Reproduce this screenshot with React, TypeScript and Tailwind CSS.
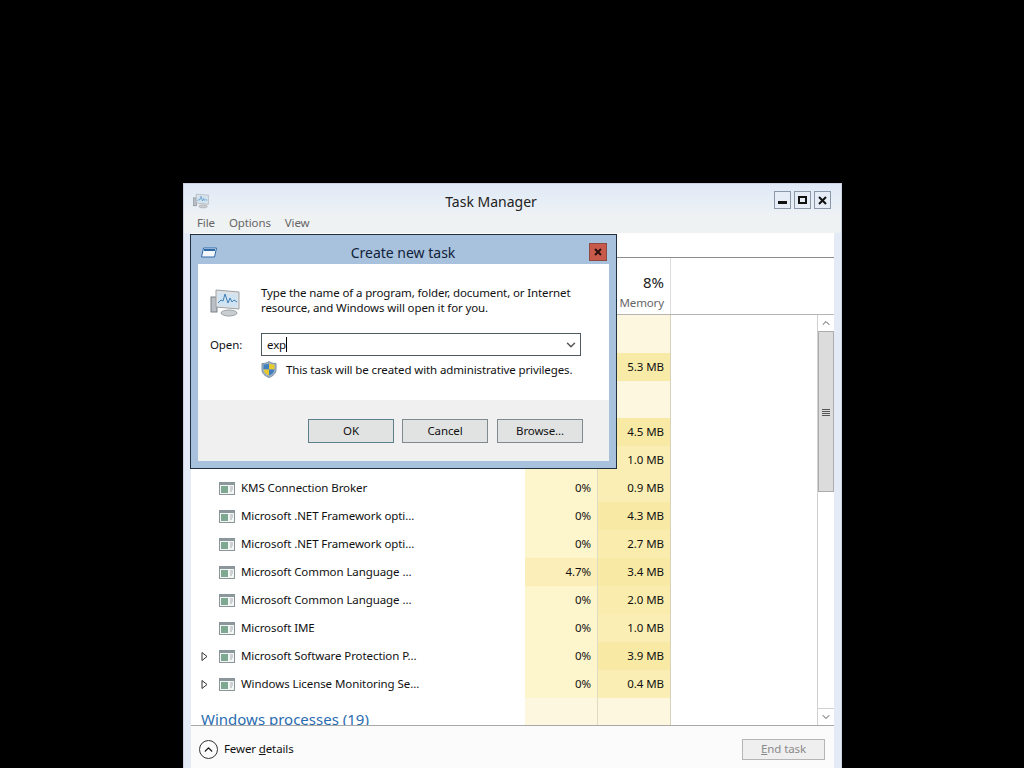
import { ChevronDown, ChevronUp } from 'lucide-react';

const FONT = '"Noto Sans", "Open Sans", sans-serif';

interface Row {
  name?:   string;
  cpu?:    string;
  mem?:    string;
  cpuBg:   string;
  memBg:   string;
  h:       string;
  arrow?:  boolean;
}

const rows: Row[] = [
  { cpuBg: 'bg-[#fdf7e0]', memBg: 'bg-[#fdf7e0]', h: 'h-[38px]' },
  { mem: '5.3 MB', cpuBg: 'bg-[#fdf5cb]', memBg: 'bg-[#f8eba8]', h: 'h-[28px]' },
  { cpuBg: 'bg-[#fdf7e0]', memBg: 'bg-[#fdf7e0]', h: 'h-[37px]' },
  { mem: '4.5 MB', cpuBg: 'bg-[#fdf5cb]', memBg: 'bg-[#f8eaa5]', h: 'h-[28px]' },
  { mem: '1.0 MB', cpuBg: 'bg-[#fdf5cb]', memBg: 'bg-[#faeeb4]', h: 'h-[28px]' },
  { name: 'KMS Connection Broker', cpu: '0%', mem: '0.9 MB', cpuBg: 'bg-[#fdf5cb]', memBg: 'bg-[#faeeb4]', h: 'h-[28px]' },
  { name: 'Microsoft .NET Framework opti...', cpu: '0%', mem: '4.3 MB', cpuBg: 'bg-[#fdf5cb]', memBg: 'bg-[#f8eaa5]', h: 'h-[28px]' },
  { name: 'Microsoft .NET Framework opti...', cpu: '0%', mem: '2.7 MB', cpuBg: 'bg-[#fdf5cb]', memBg: 'bg-[#f9ecad]', h: 'h-[28px]' },
  { name: 'Microsoft Common Language ...', cpu: '4.7%', mem: '3.4 MB', cpuBg: 'bg-[#fbeeb9]', memBg: 'bg-[#f8eaa5]', h: 'h-[28px]' },
  { name: 'Microsoft Common Language ...', cpu: '0%', mem: '2.0 MB', cpuBg: 'bg-[#fdf5cb]', memBg: 'bg-[#f9ecad]', h: 'h-[28px]' },
  { name: 'Microsoft IME', cpu: '0%', mem: '1.0 MB', cpuBg: 'bg-[#fdf5cb]', memBg: 'bg-[#faeeb4]', h: 'h-[28px]' },
  { name: 'Microsoft Software Protection P...', cpu: '0%', mem: '3.9 MB', cpuBg: 'bg-[#fdf5cb]', memBg: 'bg-[#f8eaa5]', h: 'h-[28px]', arrow: true },
  { name: 'Windows License Monitoring Se...', cpu: '0%', mem: '0.4 MB', cpuBg: 'bg-[#fdf5cb]', memBg: 'bg-[#faeeb4]', h: 'h-[28px]', arrow: true },
];

function ProcessIcon() {
  return (
    <svg width="16" height="13" viewBox="0 0 16 13" className="shrink-0">
      <rect x="0.5" y="0.5" width="15" height="12" fill="#f4f6f6" stroke="#8a9499" />
      <rect x="1" y="1" width="14" height="2" fill="#8d989d" />
      <rect x="2" y="4" width="7" height="7" fill="#7fa892" />
      <path d="M11 5h3M11 7h3M11 9h2" stroke="#a3abaf" />
    </svg>
  );
}

function MonitorIcon({ size }: { size: number }) {
  return (
    <svg width={size} height={size} viewBox="0 0 32 32">
      <rect x="1" y="11" width="6" height="15" fill="#b9bfc4" stroke="#7b8287" />
      <path d="M6 4l23 2v17L6 21z" fill="#dfe3e6" stroke="#9aa1a6" />
      <path d="M8 7l19 1.500v12.500L8 19z" fill="#cfe3f3" />
      <path d="M8 17l3-3 2 1 2-7 3 9 2-5 2 4 2-2 3 2" fill="none" stroke="#3f7fb5" />
      <ellipse cx="19" cy="27" rx="8" ry="3" fill="#c9cdd0" stroke="#9ba1a5" />
    </svg>
  );
}

function ShieldIcon() {
  return (
    <svg width="16" height="17" viewBox="0 0 16 17">
      <path d="M8 .5c2 1.500 4 2 7 2v6c0 4-3 6.500-7 8-4-1.500-7-4-7-8v-6c3 0 5-.5 7-2z" fill="#9fb2c4" stroke="#7d8fa2" />
      <path d="M8 2.500v6H2.500v-5c2 0 4-.3 5.500-1z" fill="#3f7fc0" />
      <path d="M8 2.500c1.500.7 3.500 1 5.500 1v5H8z" fill="#e8c92e" />
      <path d="M2.500 8.500H8v6c-3-1-5-3-5.500-6z" fill="#e8c92e" />
      <path d="M8 8.500h5.500c-.5 3-2.500 5-5.500 6z" fill="#3f7fc0" />
    </svg>
  );
}

function CaptionButton({ children }: { children: React.ReactNode }) {
  return (
    <div className="w-[17px] h-[18px] border border-[#8a98aa] bg-[#e6edf7] flex items-center justify-center">
      {children}
    </div>
  );
}

function DialogButton({ label, className }: { label: string; className?: string }) {
  return (
    <div className={`w-[86px] h-[24px] border bg-[#e1e2e2] text-[11.5px] tracking-[-0.12px] text-[#111] flex items-center justify-center ${className ?? 'border-[#7f8a8f]'}`}>
      {label}
    </div>
  );
}

function CreateTaskDialog() {
  return (
    <div className="absolute left-[190px] top-[234px] w-[427px] h-[235px] border border-[#20303f] bg-[#a8c1dc] flex flex-col px-[7px] pb-[7px]">
      <div className="h-[29px] shrink-0 flex items-center relative">
        <svg width="16" height="11" viewBox="0 0 16 11" className="ml-[3px] mt-[5px] shrink-0">
          <path d="M2.500 1h13l-2 9H.5z" fill="#f4f8fd" stroke="#2f6aa8" />
          <path d="M3 3h11" stroke="#2f6aa8" strokeWidth="2" />
        </svg>
        <div className="flex-1 text-center text-[14px] text-[#10223a] mt-[6px]">Create new task</div>
        <div className="w-[18px] h-[18px] mr-[2px] mt-[4px] border border-[#8f4a40] bg-[#c75a4a] flex items-center justify-center shrink-0">
          <svg width="8" height="8" viewBox="0 0 8 8"><path d="M1 1l6 6M7 1L1 7" stroke="#2a1010" strokeWidth="2" /></svg>
        </div>
      </div>
      <div className="flex-1 bg-white flex flex-col">
        <div className="flex-1 pt-[21px] pl-[12px] text-[11.5px] tracking-[-0.12px] text-[#111]">
          <div className="flex">
            <div className="w-[51px] shrink-0 pt-[1px]"><MonitorIcon size={32} /></div>
            <div className="leading-[15px]">
              <div>Type the name of a program, folder, document, or Internet</div>
              <div>resource, and Windows will open it for you.</div>
            </div>
          </div>
          <div className="flex items-center mt-[15px]">
            <div className="w-[51px] shrink-0">Open:</div>
            <div className="w-[320px] h-[23px] border border-[#4e5a60] flex items-center pl-[5px] pr-[2px]">
              <span>exp</span>
              <span className="w-px h-[15px] bg-black" />
              <ChevronDown size={14} strokeWidth={2.500} className="ml-auto text-[#555]" />
            </div>
          </div>
          <div className="flex items-center mt-[5px] ml-[51px]">
            <ShieldIcon />
            <span className="ml-[9px]">This task will be created with administrative privileges.</span>
          </div>
        </div>
        <div className="h-[61px] bg-[#f0f0f0] shrink-0 flex justify-end pt-[19px] pr-[26px] gap-[8px]">
          <DialogButton label="OK" className="border-[#5d7f8c]" />
          <DialogButton label="Cancel" />
          <DialogButton label="Browse..." className="border-[#7f8a8f] ml-px" />
        </div>
      </div>
    </div>
  );
}

export default function App() {
  return (
    <div className="relative w-[1024px] h-[768px] overflow-hidden bg-black pt-[183px] pl-[183px]" style={{ fontFamily: FONT }}>
      <div className="w-[659px] h-[585px] bg-[#e4ebf7] border-t border-l border-r border-[#c8d2e0] flex flex-col px-[7px]">
        {/* title bar */}
        <div className="h-[32px] shrink-0 flex items-center relative bg-gradient-to-b from-[#dfe9f6] to-[#eef2f5] -mx-[7px] px-[9px]">
          <MonitorIcon size={17} />
          <div className="absolute inset-x-0 text-center text-[14px] text-[#222] top-[7px] pr-[43px]">Task Manager</div>
          <div className="ml-auto mr-[1px] flex gap-[3px]">
            <CaptionButton><span className="w-[9px] h-[3px] bg-[#111] mt-[5px]" /></CaptionButton>
            <CaptionButton><span className="w-[9px] h-[8px] border-2 border-[#111]" /></CaptionButton>
            <CaptionButton><svg width="9" height="9" viewBox="0 0 9 9"><path d="M1 1l7 7M8 1L1 8" stroke="#111" strokeWidth="2" /></svg></CaptionButton>
          </div>
        </div>
        {/* menu */}
        <div className="h-[17px] shrink-0 flex items-center gap-[14px] pb-[3px] text-[11.5px] tracking-[-0.12px] text-[#666] bg-[#eff2f3] -mx-[7px] px-[13px]">
          <span>File</span>
          <span>Options</span>
          <span>View</span>
        </div>
        {/* client */}
        <div className="flex-1 bg-white flex flex-col min-h-0">
          <div className="h-[25px] shrink-0 border-b border-[#8d8d8d]" />
          <div className="h-[57px] shrink-0 flex border-b border-[#b5b5b5]">
            <div className="w-[334px]" />
            <div className="w-[73px] border-r border-[#dcdcdc]" />
            <div className="w-[73px] border-r border-[#dcdcdc] flex flex-col items-end pr-[6px] pt-[14px]">
              <span className="text-[15px] leading-[20px] text-[#222]">8%</span>
              <span className="text-[11.5px] tracking-[-0.12px] leading-[16px] text-[#666] mt-[3px]">Memory</span>
            </div>
          </div>
          <div className="flex-1 flex min-h-0">
            <div className="w-[626px] overflow-hidden">
              {rows.map((r, i) => (
                <div key={i} className={`flex ${r.h} text-[11.5px] tracking-[-0.08px] text-[#111] items-stretch`}>
                  <div className="w-[334px] flex items-center pl-[10px]">
                    <div className="w-[18px] shrink-0">
                      {r.arrow && (
                        <svg width="7" height="9" viewBox="0 0 7 9"><path d="M1 .5l5 4-5 4z" fill="#fff" stroke="#333" /></svg>
                      )}
                    </div>
                    {r.name && <ProcessIcon />}
                    {r.name && <span className="ml-[6px] whitespace-nowrap">{r.name}</span>}
                  </div>
                  <div className={`w-[73px] border-r border-[#e0dcc4] ${r.cpuBg} flex items-center justify-end pr-[6px]`}>{r.cpu}</div>
                  <div className={`w-[73px] border-r border-[#d8d3b8] ${r.memBg} flex items-center justify-end pr-[6px]`}>{r.mem}</div>
                </div>
              ))}
              <div className="flex h-[41px]">
                <div className="w-[334px] pl-[10px] pt-[9px] text-[15px] leading-[24px] text-[#2a6cb0] whitespace-nowrap">Windows processes (19)</div>
                <div className="w-[73px] border-r border-[#e0dcc4] bg-[#fdf7e0]" />
                <div className="w-[73px] border-r border-[#d8d3b8] bg-[#fdf7e0]" />
              </div>
            </div>
            <div className="w-[17px] shrink-0 flex flex-col border-l border-[#d0d0d0] ml-auto">
              <div className="h-[16px] shrink-0 flex items-center justify-center text-[#555]"><ChevronUp size={12} /></div>
              <div className="h-[161px] shrink-0 bg-[#dcdcdc] border border-[#acacac] flex flex-col items-center justify-center gap-px pt-[2px]">
                <span className="w-[8px] h-px bg-[#555]" />
                <span className="w-[8px] h-px bg-[#555]" />
                <span className="w-[8px] h-px bg-[#555]" />
                <span className="w-[8px] h-px bg-[#555]" />
              </div>
              <div className="flex-1" />
              <div className="h-[17px] shrink-0 flex items-center justify-center text-[#555] border-t border-[#d0d0d0]"><ChevronDown size={12} /></div>
            </div>
          </div>
        </div>
        {/* footer */}
        <div className="h-[43px] shrink-0 border-t border-[#a8a8a8] bg-[#fbfbfb] flex items-center pt-[4px] pl-[8px] pr-[9px] text-[11.5px] tracking-[-0.12px] text-[#111]">
          <div className="w-[19px] h-[19px] rounded-full border border-[#333] flex items-center justify-center">
            <ChevronUp size={13} strokeWidth={2.500} />
          </div>
          <span className="ml-[6px]">Fewer <span className="underline">d</span>etails</span>
          <div className="ml-auto w-[83px] h-[21px] border border-[#b5b5b5] bg-[#efefef] text-[#8a8a8a] flex items-center justify-center">
            <span><span className="underline">E</span>nd task</span>
          </div>
        </div>
      </div>
      <CreateTaskDialog />
    </div>
  );
}
